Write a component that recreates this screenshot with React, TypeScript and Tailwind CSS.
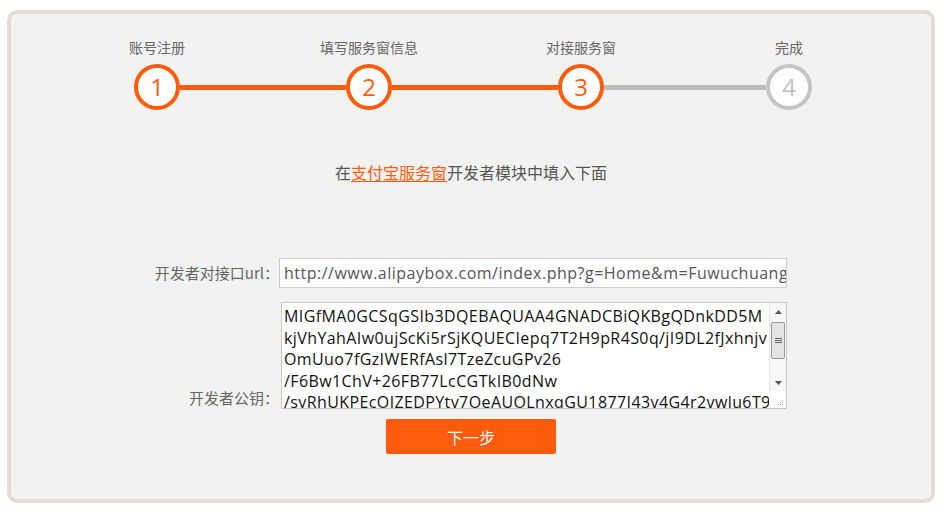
import React from "react";

function Step({ n, label, active }: { n: number; label: string; active: boolean }) {
  return (
    <div className="flex w-[46px] flex-col items-center">
      <div className="h-[18px] whitespace-nowrap text-[14px] leading-[18px] text-[#666]">{label}</div>
      <div
        className={
          "mt-[8px] flex h-[46px] w-[46px] items-center justify-center rounded-full border-[4px] bg-white text-[24px] leading-none " +
          (active ? "border-[#ff5b0c] text-[#ff5b0c]" : "border-[#c4c4c4] text-[#c2c2c2]")
        }
        style={{ fontFamily: '"Open Sans", "Liberation Sans", sans-serif' }}
      >
        {n}
      </div>
    </div>
  );
}

function Line({ w, active }: { w: string; active: boolean }) {
  return (
    <div
      className={
        "mb-[20px] h-[5px] self-end " + w + " " + (active ? "bg-[#ff5b0c]" : "bg-[#bbbbbb]")
      }
    />
  );
}

const KEY_LINES = [
  "MIGfMA0GCSqGSIb3DQEBAQUAA4GNADCBiQKBgQDnkDD5M",
  "kjVhYahAIw0ujScKi5rSjKQUECIepq7T2H9pR4S0q/jI9DL2fJxhnjv",
  "OmUuo7fGzIWERfAsl7TzeZcuGPv26",
  "/F6Bw1ChV+26FB77LcCGTkIB0dNw",
  "/syRhUKPEcOJZEDPYty7OeAUOLnxqGU1877I43v4G4r2vwlu6T9",
];

export default function App() {
  return (
    <div
      className="h-[512px] w-[946px] overflow-hidden bg-white pt-[10px] pl-[7px]"
      style={{ fontFamily: '"Noto Sans CJK SC", "Open Sans", sans-serif' }}
    >
      <div className="h-[493px] w-[928px] rounded-[10px] border-[4px] border-[#e2ddd5] bg-[#f2f2f0] pt-[24px]">
        {/* steps */}
        <div className="flex pl-[123px]">
          <Step n={1} label="账号注册" active />
          <Line w="w-[166px]" active />
          <Step n={2} label="填写服务窗信息" active />
          <Line w="w-[166px]" active />
          <Step n={3} label="对接服务窗" active />
          <Line w="w-[162px]" active={false} />
          <Step n={4} label="完成" active={false} />
        </div>

        {/* instruction */}
        <div className="mt-[51px] text-center text-[16px] leading-[22px] text-[#555]">
          在
          <a href="#" className="text-[#ff5b0c] underline underline-offset-2">
            支付宝服务窗
          </a>
          开发者模块中填入下面
        </div>

        {/* url row */}
        <div className="mt-[75px] flex items-center pl-[128px]">
          <div className="w-[140px] whitespace-nowrap text-right text-[15px] leading-[20px] text-[#666]">
            开发者对接口url：
          </div>
          <div
            className="flex h-[30px] w-[508px] items-center overflow-hidden whitespace-nowrap border border-[#cccccc] bg-white pl-[4px] text-[16px] tracking-[0.5px] text-[#555]"
            style={{ fontFamily: '"Open Sans", "Noto Sans CJK SC", sans-serif' }}
          >
            http://www.alipaybox.com/index.php?g=Home&amp;m=Fuwuchuang
          </div>
        </div>

        {/* key row */}
        <div className="mt-[14px] flex items-end pl-[128px]">
          <div className="w-[140px] whitespace-nowrap pb-[1px] text-right text-[15px] leading-[20px] text-[#666]">
            开发者公钥：
          </div>
          <div className="ml-[2px] flex h-[107px] w-[506px] border border-[#c8c8c8] bg-white">
            <div
              className="flex-1 overflow-hidden whitespace-pre pl-[2px] pt-[3px] text-[16px] leading-[21.5px] tracking-[0.4px] text-[#111]"
              style={{ fontFamily: '"Open Sans", sans-serif' }}
            >
              {KEY_LINES.map((l, i) => (
                <div key={i}>{l}</div>
              ))}
            </div>
            <div className="flex w-[17px] flex-col">
              <div className="flex h-[88px] flex-col border-l border-[#e6e6e6] bg-[#f7f7f7]">
                <div className="flex h-[17px] items-center justify-center">
                  <svg width="7" height="4" viewBox="0 0 7 4">
                    <path d="M0 4 L3.5 0 L7 4 Z" fill="#555" />
                  </svg>
                </div>
                <div className="mx-[1px] mt-[2px] flex h-[37px] items-center justify-center rounded-[2px] border border-[#9a9a9a] bg-[#e4e4e4]">
                  <svg width="7" height="7" viewBox="0 0 7 7">
                    <path d="M0 1.5H7M0 3.5H7M0 5.5H7" stroke="#666" strokeWidth="1" />
                  </svg>
                </div>
                <div className="flex-1" />
                <div className="flex h-[17px] items-center justify-center">
                  <svg width="7" height="4" viewBox="0 0 7 4">
                    <path d="M0 0 L7 0 L3.5 4 Z" fill="#555" />
                  </svg>
                </div>
              </div>
              <div className="flex flex-1 items-end justify-end p-[2px]">
                <svg width="7" height="7" viewBox="0 0 7 7">
                  <rect x="5" y="1" width="1" height="1" fill="#aaa" />
                  <rect x="3" y="3" width="1" height="1" fill="#aaa" />
                  <rect x="5" y="3" width="1" height="1" fill="#aaa" />
                  <rect x="1" y="5" width="1" height="1" fill="#aaa" />
                  <rect x="3" y="5" width="1" height="1" fill="#aaa" />
                  <rect x="5" y="5" width="1" height="1" fill="#aaa" />
                </svg>
              </div>
            </div>
          </div>
        </div>

        {/* button */}
        <div className="mt-[10px] flex justify-center">
          <button className="h-[35px] w-[170px] rounded-[2px] bg-[#ff5b0c] text-[16px] text-white">下一步</button>
        </div>
      </div>
    </div>
  );
}
